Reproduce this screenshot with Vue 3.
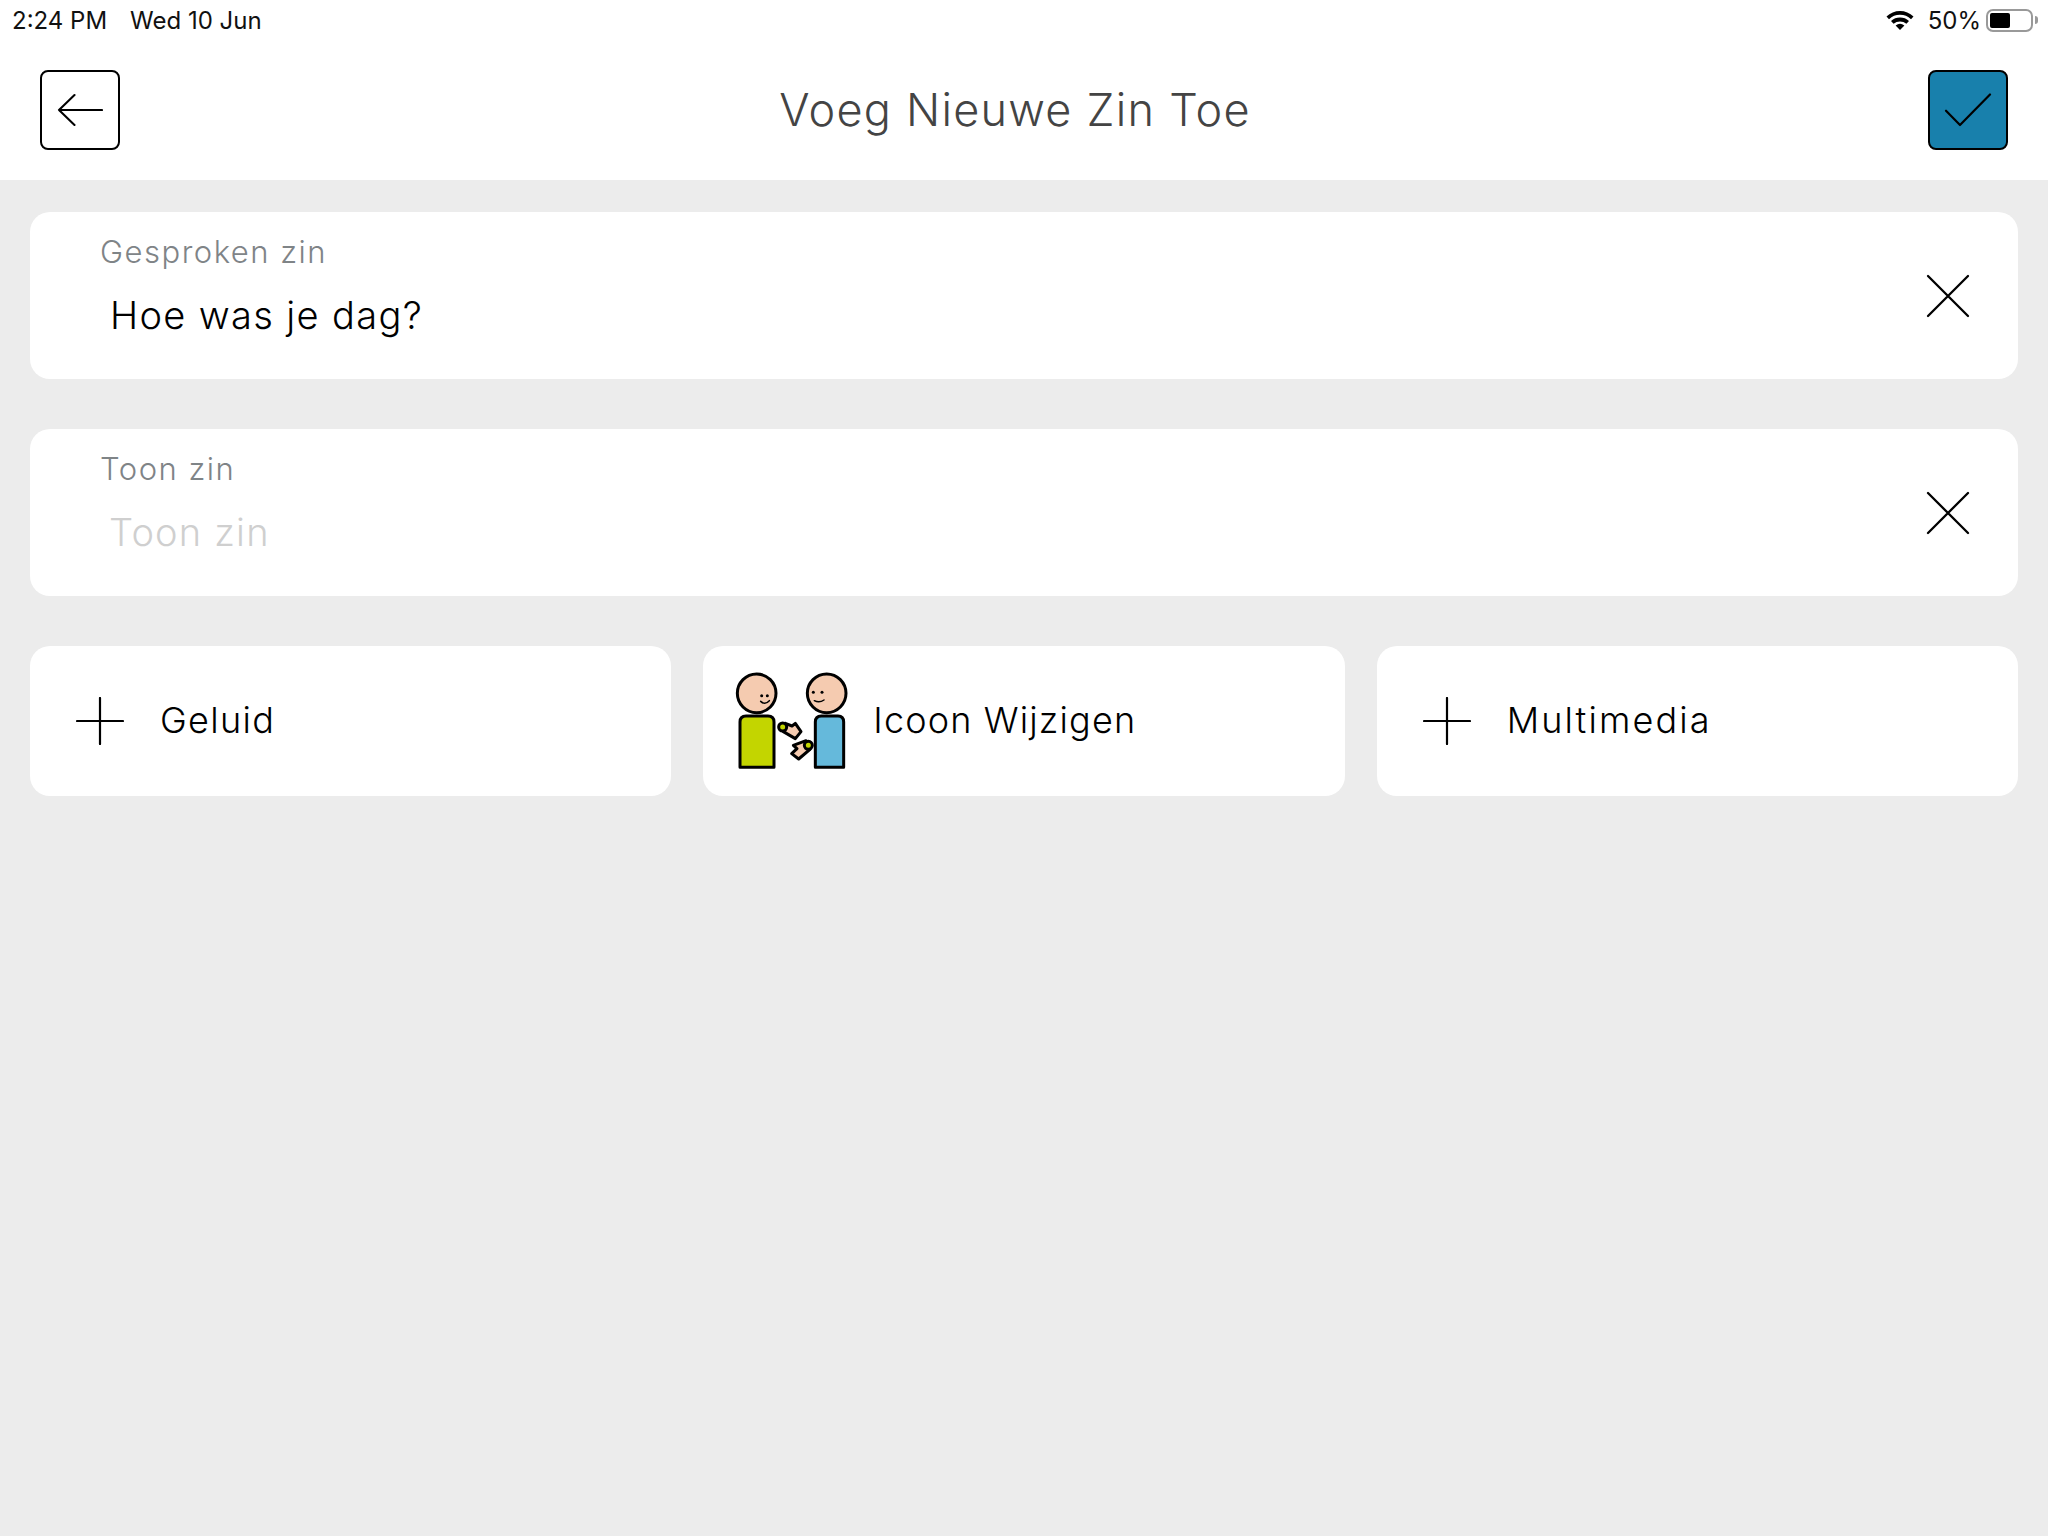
<script setup>
const fields = [
  { label: 'Gesproken zin', value: 'Hoe was je dag?', empty: false },
  { label: 'Toon zin', value: 'Toon zin', empty: true },
]
</script>

<template>
  <div class="page">
    <div class="top">
      <div class="status">
        <div class="status-left"><span>2:24 PM</span><span>Wed 10 Jun</span></div>
        <div class="status-right">
          <svg class="wifi" width="28" height="20" viewBox="0 0 28 20">
            <path d="M0.5 6.5A19.5 19.5 0 0 1 27.5 6.5L25 9.2A16 16 0 0 0 3 9.2Z" />
            <path d="M5 11A13.5 13.5 0 0 1 23 11L20.4 13.7A10 10 0 0 0 7.6 13.7Z" />
            <path d="M9.6 15.6A7 7 0 0 1 18.4 15.6L14 20Z" />
          </svg>
          <span class="pct">50%</span>
          <div class="battery"><div class="battery-level"></div></div>
          <div class="battery-tip"></div>
        </div>
      </div>
      <header class="header">
        <button class="square">
          <svg width="46" height="34" viewBox="0 0 46 34" fill="none" stroke="#000" stroke-width="2.1" stroke-linecap="round" stroke-linejoin="round">
            <path d="M45 17H2M17.5 2L2 17L17.5 32" />
          </svg>
        </button>
        <h1 class="title">Voeg Nieuwe Zin Toe</h1>
        <button class="square primary">
          <svg width="48" height="34" viewBox="0 0 48 34" fill="none" stroke="#000" stroke-width="2.2" stroke-linecap="round" stroke-linejoin="round">
            <path d="M2 17.7L16 32L46 1.5" />
          </svg>
        </button>
      </header>
    </div>

    <main class="content">
      <section v-for="f in fields" :key="f.label" class="card">
        <div class="field">
          <div class="label">{{ f.label }}</div>
          <div class="value" :class="{ placeholder: f.empty }">{{ f.value }}</div>
        </div>
        <svg class="close" width="44" height="44" viewBox="0 0 44 44" fill="none" stroke="#000" stroke-width="2.3" stroke-linecap="round">
          <path d="M2 2L42 42M42 2L2 42" />
        </svg>
      </section>

      <div class="actions">
        <button class="action">
          <svg class="plus" width="48" height="48" viewBox="0 0 48 48" fill="none" stroke="#000" stroke-width="2.2" stroke-linecap="round">
            <path d="M24 1V47M1 24H47" />
          </svg>
          <span class="action-text t-geluid">Geluid</span>
        </button>
        <button class="action action-icon">
          <svg class="people" width="180" height="140" viewBox="0 0 540 420">
            <g stroke="#000" stroke-width="9" stroke-linejoin="round">
              <path fill="#c3d500" d="M90 352V216Q90 198 108 198H174Q192 198 192 216V352Z" />
              <path fill="#65b9db" d="M316 352V216Q316 198 334 198H384Q401 198 401 216V352Z" />
              <circle fill="#f5cbb0" cx="140" cy="130" r="58" />
              <circle fill="#f5cbb0" cx="350" cy="130" r="58" />
              <path fill="#f5cbb0" d="M226 220L246 228L256 220L273 245L256 266L220 245Z" />
              <path fill="#f5cbb0" d="M288 272L250 286L261 296L245 311L266 327L300 298Z" />
              <circle fill="#c3d500" cx="218" cy="231" r="12" />
              <circle fill="#c3d500" cx="295" cy="286" r="12" />
            </g>
            <circle cx="155" cy="137" r="4.5" />
            <circle cx="172" cy="137" r="4.5" />
            <circle cx="310" cy="127" r="4.5" />
            <circle cx="336" cy="127" r="4.5" />
            <path d="M152 154Q165 166 178 152" fill="none" stroke="#000" stroke-width="4.5" stroke-linecap="round" />
            <path d="M313 152Q328 160 342 150" fill="none" stroke="#000" stroke-width="4.5" stroke-linecap="round" />
          </svg>
          <span class="action-text t-icoon">Icoon Wijzigen</span>
        </button>
        <button class="action">
          <svg class="plus" width="48" height="48" viewBox="0 0 48 48" fill="none" stroke="#000" stroke-width="2.2" stroke-linecap="round">
            <path d="M24 1V47M1 24H47" />
          </svg>
          <span class="action-text t-multi">Multimedia</span>
        </button>
      </div>
    </main>
  </div>
</template>

<style>
html, body { margin: 0; background: #ececec; }
</style>

<style scoped>
.page {
  width: 2048px;
  height: 1536px;
  background: #ececec;
  font-family: Inter, "Liberation Sans", sans-serif;
  color: #000;
  overflow: hidden;
}
.top { background: #fff; height: 180px; }
.status {
  height: 40px;
  display: flex;
  justify-content: space-between;
  align-items: center;
  padding: 0 10px 0 12px;
  font-size: 24px;
  color: #111;
}
.status-left { display: flex; gap: 23px; }
.status-right { display: flex; align-items: center; }
.wifi { margin-right: 14px; fill: #000; }
.pct { margin-right: 5px; }
.battery {
  box-sizing: border-box;
  width: 47px;
  height: 23px;
  border: 2px solid #999;
  border-radius: 7px;
  padding: 2px;
}
.battery-level { width: 20px; height: 15px; background: #000; border-radius: 2px; }
.battery-tip {
  width: 3px;
  height: 8px;
  margin-left: 2px;
  background: #999;
  border-radius: 0 3px 3px 0;
}
.header {
  height: 140px;
  box-sizing: border-box;
  padding: 0 40px;
  display: flex;
  align-items: center;
  justify-content: space-between;
}
.square {
  box-sizing: border-box;
  width: 80px;
  height: 80px;
  padding: 0;
  background: #fff;
  border: 2.5px solid #000;
  border-radius: 8px;
  display: flex;
  align-items: center;
  justify-content: center;
}
.primary { background: #1880ac; }
.title {
  margin: -2px 18px 0 0;
  font-size: 45px;
  font-weight: 300;
  letter-spacing: 1.25px;
  color: #444;
}
.content {
  padding: 32px 30px 0;
  display: flex;
  flex-direction: column;
  gap: 50px;
}
.card {
  height: 167px;
  box-sizing: border-box;
  background: #fff;
  border-radius: 20px;
  display: flex;
  align-items: center;
  justify-content: space-between;
  padding: 0 48px 0 70px;
}
.field { align-self: flex-start; padding-top: 22px; }
.label {
  font-size: 31px;
  line-height: 36px;
  font-weight: 300;
  letter-spacing: 1.5px;
  color: #7f8487;
}
.value {
  margin: 22px 0 0 10px;
  font-size: 38px;
  line-height: 46px;
  font-weight: 300;
  letter-spacing: 1.35px;
  color: #000;
}
.placeholder { color: #cfcfcf; margin-left: 9px; letter-spacing: 1.2px; }
.actions {
  display: grid;
  grid-template-columns: repeat(3, 1fr);
  gap: 32px;
}
.action {
  height: 150px;
  padding: 0 0 0 46px;
  background: #fff;
  border: 0;
  border-radius: 20px;
  display: flex;
  align-items: center;
  font-family: inherit;
  color: #000;
}
.action-icon { padding-left: 7px; }
.plus { margin-right: 36px; flex: none; }
.people { margin-right: -17px; flex: none; margin-top: -2px; }
.action-text {
  font-size: 36px;
  font-weight: 300;
  margin-top: -2px;
}
.t-geluid { letter-spacing: 1.3px; }
.t-icoon { letter-spacing: 1.15px; }
.t-multi { letter-spacing: 2.1px; }
</style>
